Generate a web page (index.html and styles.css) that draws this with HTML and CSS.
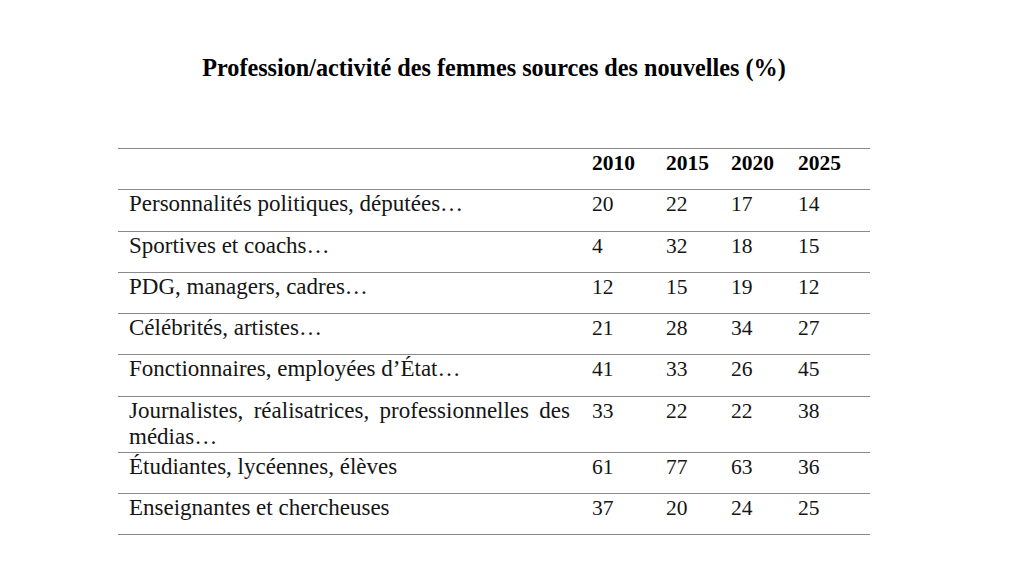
FILE: index.html
```html
<!DOCTYPE html>
<html lang="fr">
<head>
<meta charset="utf-8">
<title>Profession/activité des femmes sources des nouvelles</title>
<link rel="stylesheet" href="styles.css">
</head>
<body>
<main class="page">
  <h1 class="title">Profession/activité des femmes sources des nouvelles (%)</h1>
  <table class="data">
    <colgroup>
      <col class="c-label"><col class="c-2010"><col class="c-2015"><col class="c-2020"><col class="c-2025">
    </colgroup>
    <thead>
      <tr><th></th><th>2010</th><th>2015</th><th>2020</th><th>2025</th></tr>
    </thead>
    <tbody>
      <tr><td class="label">Personnalités politiques, députées…</td><td>20</td><td>22</td><td>17</td><td>14</td></tr>
      <tr><td class="label">Sportives et coachs…</td><td>4</td><td>32</td><td>18</td><td>15</td></tr>
      <tr><td class="label">PDG, managers, cadres…</td><td>12</td><td>15</td><td>19</td><td>12</td></tr>
      <tr><td class="label">Célébrités, artistes…</td><td>21</td><td>28</td><td>34</td><td>27</td></tr>
      <tr><td class="label">Fonctionnaires, employées d’État…</td><td>41</td><td>33</td><td>26</td><td>45</td></tr>
      <tr class="tall"><td class="label">Journalistes, réalisatrices, professionnelles des médias…</td><td>33</td><td>22</td><td>22</td><td>38</td></tr>
      <tr><td class="label">Étudiantes, lycéennes, élèves</td><td>61</td><td>77</td><td>63</td><td>36</td></tr>
      <tr><td class="label">Enseignantes et chercheuses</td><td>37</td><td>20</td><td>24</td><td>25</td></tr>
    </tbody>
  </table>
</main>
</body>
</html>
```
FILE: styles.css
```css
html, body {
  margin: 0;
  padding: 0;
  background: #ffffff;
}
body {
  font-family: "Liberation Serif", "Times New Roman", serif;
  color: #151515;
}
.page {
  width: 752px;
  margin-left: 118px;
  padding-top: 54px;
}
.title {
  margin: 0 0 66px 0;
  text-align: center;
  font-size: 24.2px;
  line-height: 28px;
  font-weight: bold;
  color: #000;
}
.data {
  width: 752px;
  border-collapse: collapse;
  table-layout: fixed;
  font-size: 21.5px;
}
.c-label { width: 463px; }
.c-2010 { width: 74px; }
.c-2015 { width: 65px; }
.c-2020 { width: 67px; }
.c-2025 { width: 83px; }
.data th,
.data td {
  border-top: 1px solid #8a8a8a;
  border-bottom: 1px solid #8a8a8a;
  padding: 1px 11px 0 11px;
  height: 39.3px;
  vertical-align: top;
  text-align: left;
  line-height: 26px;
}
.data th {
  font-weight: bold;
  color: #000;
}
.data td.label {
  font-size: 23px;
  text-align: justify;
}
.data tr.tall td {
  height: 54px;
}
```
